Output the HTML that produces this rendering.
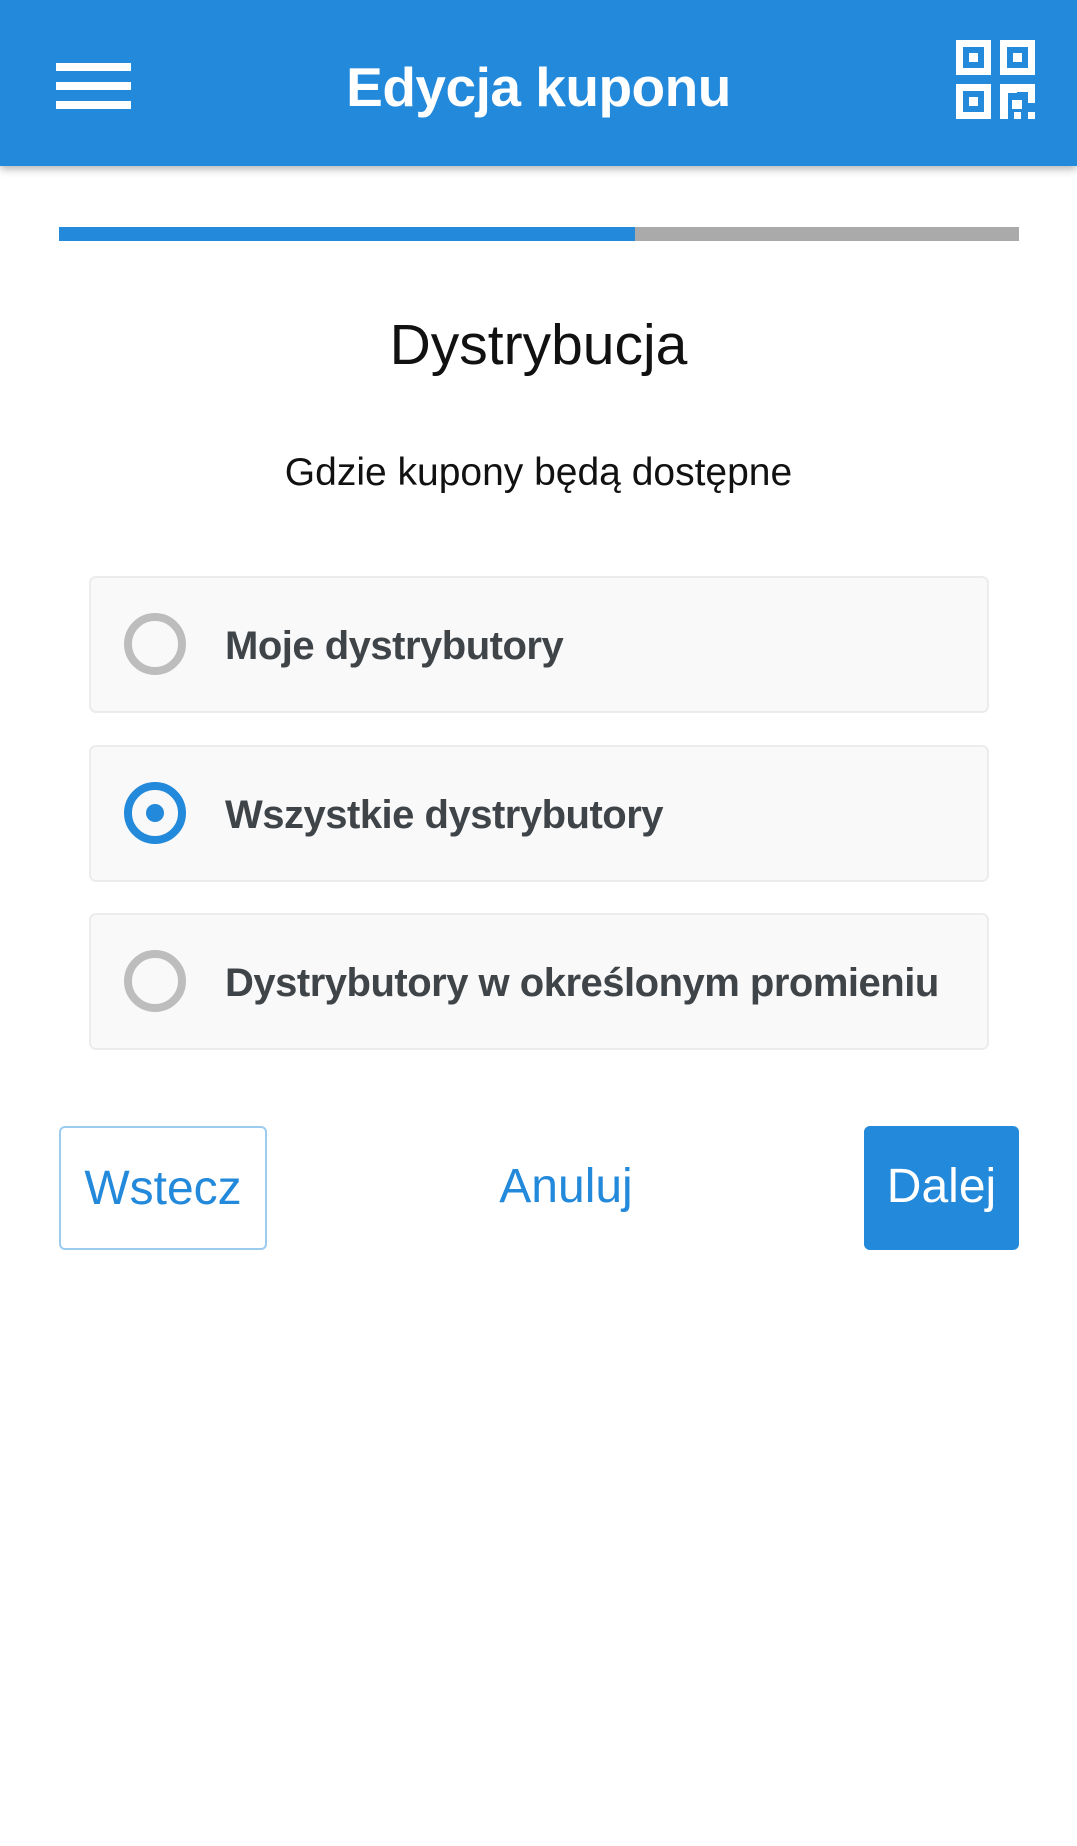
<!DOCTYPE html>
<html><head><meta charset="utf-8"><style>
*{margin:0;padding:0;box-sizing:border-box}
body{width:1077px;height:1846px;background:#fff;font-family:"Liberation Sans",sans-serif;position:relative;overflow:hidden}
.hdr{position:absolute;left:0;top:0;width:1077px;height:166px;background:#2389db;box-shadow:0 3px 8px rgba(0,0,0,.3)}
.hb{position:absolute;left:56px;width:75px;height:8px;background:#fff}
.title{position:absolute;left:0;width:1077px;top:57px;text-align:center;color:#fff;font-weight:bold;font-size:55px;line-height:60px;letter-spacing:-0.5px}
.bar{position:absolute;top:227px;height:14px}
.h1{position:absolute;top:312px;width:1077px;text-align:center;font-size:57px;line-height:66px;color:#111}
.sub{position:absolute;top:449px;width:1077px;text-align:center;font-size:39px;line-height:48px;color:#111}
.card{position:absolute;left:89px;width:900px;height:137px;background:#f9f9f9;border:2px solid #ececec;border-radius:7px}
.rad{position:absolute;left:33px;top:35px;width:62px;height:62px;border-radius:50%;border:8px solid #bdbdbd}
.rad.on{border-color:#2389db}
.rad.on:after{content:"";position:absolute;left:14px;top:14px;width:18px;height:18px;border-radius:50%;background:#2389db}
.lbl{position:absolute;left:134px;top:2px;line-height:133px;font-size:40px;font-weight:bold;color:#3f4449;white-space:nowrap;letter-spacing:-0.5px}
.btn{position:absolute;top:1126px;height:124px;line-height:122px;font-size:48px;text-align:center;border-radius:6px;color:#2389db}
</style></head><body>
<div class="hdr">
<div class="hb" style="top:63px"></div><div class="hb" style="top:82px"></div><div class="hb" style="top:101px"></div>
<div class="title">Edycja kuponu</div>
<svg style="position:absolute;left:956px;top:40px" width="80" height="80" viewBox="0 0 80 80" fill="#fff">
<path fill-rule="evenodd" d="M0 0h35v35H0zM7 7v21h21V7z"/><rect x="13" y="13" width="9" height="9"/>
<path fill-rule="evenodd" d="M44 0h35v35H44zM51 7v21h21V7z"/><rect x="57" y="13" width="9" height="9"/>
<path fill-rule="evenodd" d="M0 44h35v35H0zM7 51v21h21V51z"/><rect x="13" y="57" width="9" height="9"/>
<rect x="44" y="44" width="8" height="35"/><rect x="52" y="44" width="9" height="9"/><rect x="61" y="44" width="18" height="8"/><rect x="72" y="52" width="7" height="11"/><rect x="56" y="60" width="10" height="9"/><rect x="72" y="72" width="7" height="7"/><rect x="58" y="72" width="7" height="7"/>
</svg>
</div>
<div class="bar" style="left:59px;width:576px;background:#2389db"></div>
<div class="bar" style="left:635px;width:384px;background:#aaaaaa"></div>
<div class="h1">Dystrybucja</div>
<div class="sub">Gdzie kupony będą dostępne</div>
<div class="card" style="top:576px"><div class="rad"></div><div class="lbl">Moje dystrybutory</div></div>
<div class="card" style="top:745px"><div class="rad on"></div><div class="lbl">Wszystkie dystrybutory</div></div>
<div class="card" style="top:913px"><div class="rad"></div><div class="lbl">Dystrybutory w określonym promieniu</div></div>
<div class="btn" style="left:59px;width:208px;border:2px solid #9ccbf0">Wstecz</div>
<div class="btn" style="left:466px;width:200px">Anuluj</div>
<div class="btn" style="left:864px;width:155px;background:#2389db;color:#fff">Dalej</div>
</body></html>
